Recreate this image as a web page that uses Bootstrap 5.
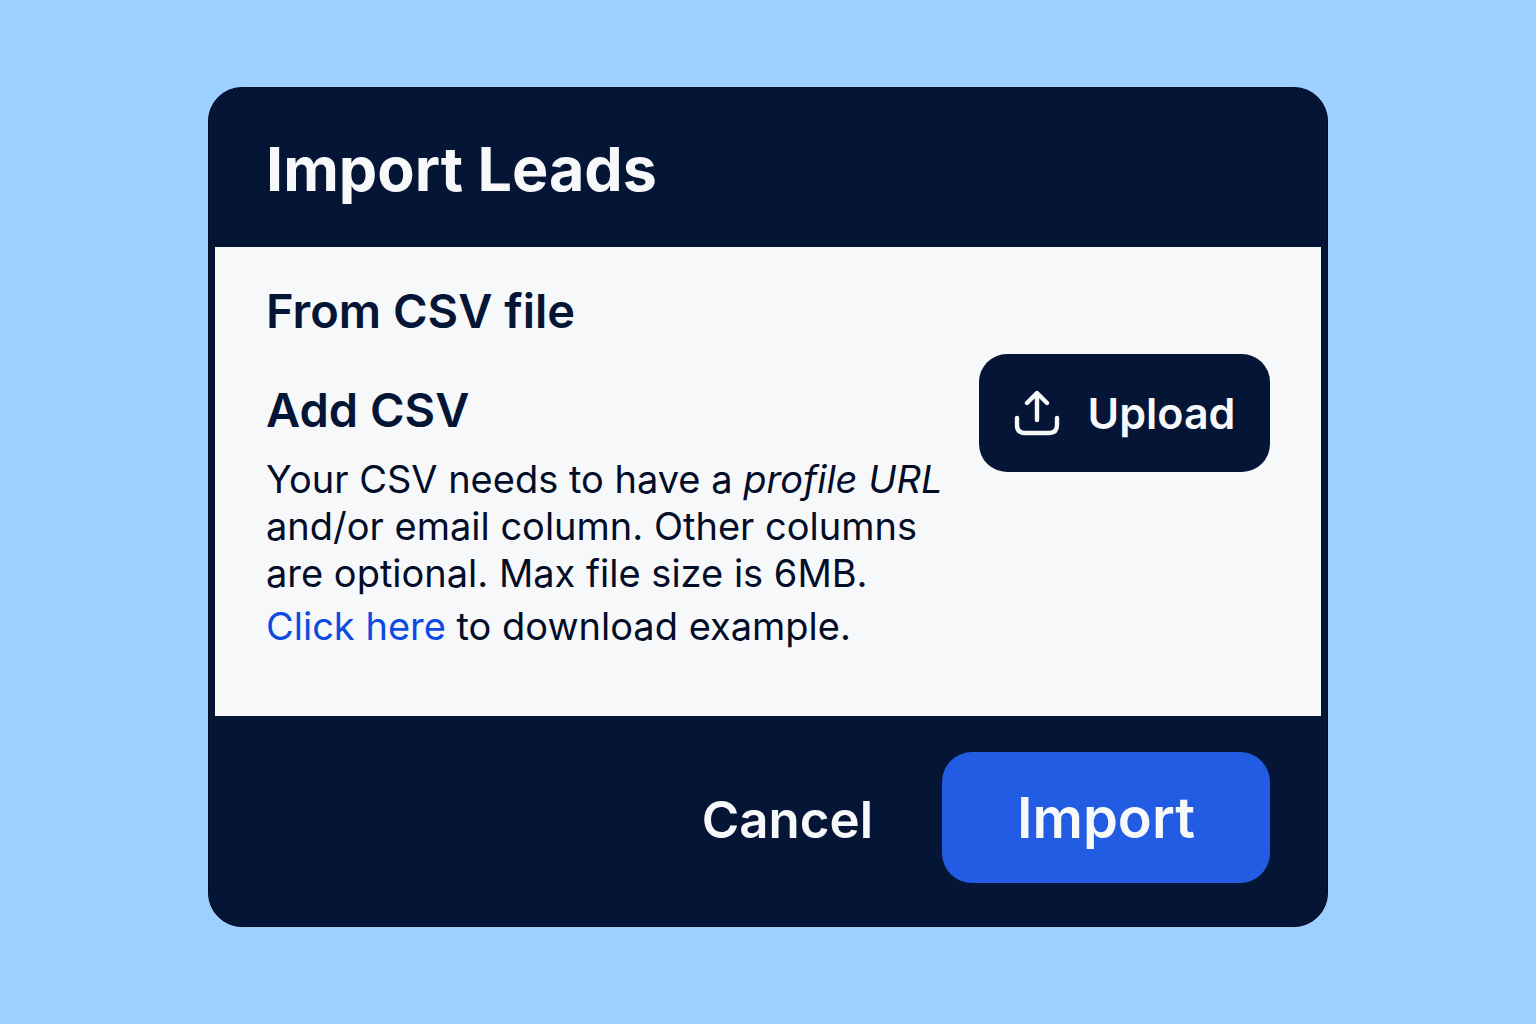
<!DOCTYPE html>
<html lang="en">
<head>
<meta charset="utf-8">
<meta name="viewport" content="width=device-width, initial-scale=1">
<title>Import Leads</title>
<link rel="stylesheet" href="https://cdn.jsdelivr.net/npm/bootstrap@5.3.0/dist/css/bootstrap.min.css">
<style>
:root { --navy: #051535; --paper: #f7f8fa; --blue: #215ce2; }
body { background: #9dcfff; font-family: Inter, "Liberation Sans", sans-serif; color: var(--navy); }
.page-area { padding-bottom: 10px; }
.dialog-box { width: 100%; max-width: 1120px; background: var(--navy); border: 1px solid #020a20; border-radius: 34px; }
.dialog-head { padding: 40px 57px 36px; color: var(--paper); }
.dialog-head h1 { font-size: 61px; line-height: 83px; font-weight: 700; }
.dialog-main { margin: 0 6px; padding: 32px 51px 66px; background: var(--paper); }
.dialog-main h2 { font-size: 47px; line-height: 64px; font-weight: 600; }
.source-row { margin-top: 11px; }
.source-info { padding-top: 24px; }
.help-text { margin: 6px 0 0; font-size: 38px; line-height: 47px; color: #040d28; }
.help-text a { color: #0d4be0; }
.dialog-foot { padding: 36px 57px 43px; gap: 36px; }
.btn-upload { width: 291px; height: 118px; gap: 28px; border-radius: 28px; background: var(--navy); color: var(--paper); font-size: 43px; font-weight: 600; }
.btn-cancel { color: var(--paper); font-size: 51px; font-weight: 600; padding: 0 32px; }
.btn-import { width: 328px; height: 131px; border-radius: 30px; background: var(--blue); color: var(--paper); font-size: 56px; font-weight: 600; }
.btn-upload:hover, .btn-cancel:hover, .btn-import:hover { color: #fff; background: #2e69ee; }
</style>
</head>
<body>
<main class="page-area container-fluid min-vh-100 d-flex align-items-center justify-content-center">
  <section class="dialog-box" aria-labelledby="dialog-title">
    <header class="dialog-head"><h1 class="m-0" id="dialog-title">Import Leads</h1></header>
    <div class="dialog-main">
      <h2 class="mb-0">From CSV file</h2>
      <div class="source-row d-flex justify-content-between align-items-start">
        <div class="source-info">
          <h2 class="mb-0 pb-2">Add CSV</h2>
          <p class="help-text">Your CSV needs to have a <em>profile URL</em><br>and/or email column. Other columns<br>are optional. Max file size is 6MB.</p>
          <p class="help-text"><a href="#" class="text-decoration-none">Click here</a> to download example.</p>
        </div>
        <button type="button" class="btn btn-upload d-flex align-items-center justify-content-center flex-shrink-0">
          <svg width="46" height="46" viewBox="0 0 46 46" fill="none" stroke="currentColor" stroke-width="4.4" stroke-linecap="round" stroke-linejoin="round" aria-hidden="true"><path d="M23 30V4M13 13l10-10 10 10M3 28v7q0 8 8 8h24q8 0 8-8v-7"/></svg>
          Upload
        </button>
      </div>
    </div>
    <footer class="dialog-foot d-flex justify-content-end align-items-baseline">
      <button type="button" class="btn btn-cancel">Cancel</button>
      <button type="button" class="btn btn-import">Import</button>
    </footer>
  </section>
</main>
<script src="https://cdn.jsdelivr.net/npm/bootstrap@5.3.0/dist/js/bootstrap.bundle.min.js"></script>
</body>
</html>
